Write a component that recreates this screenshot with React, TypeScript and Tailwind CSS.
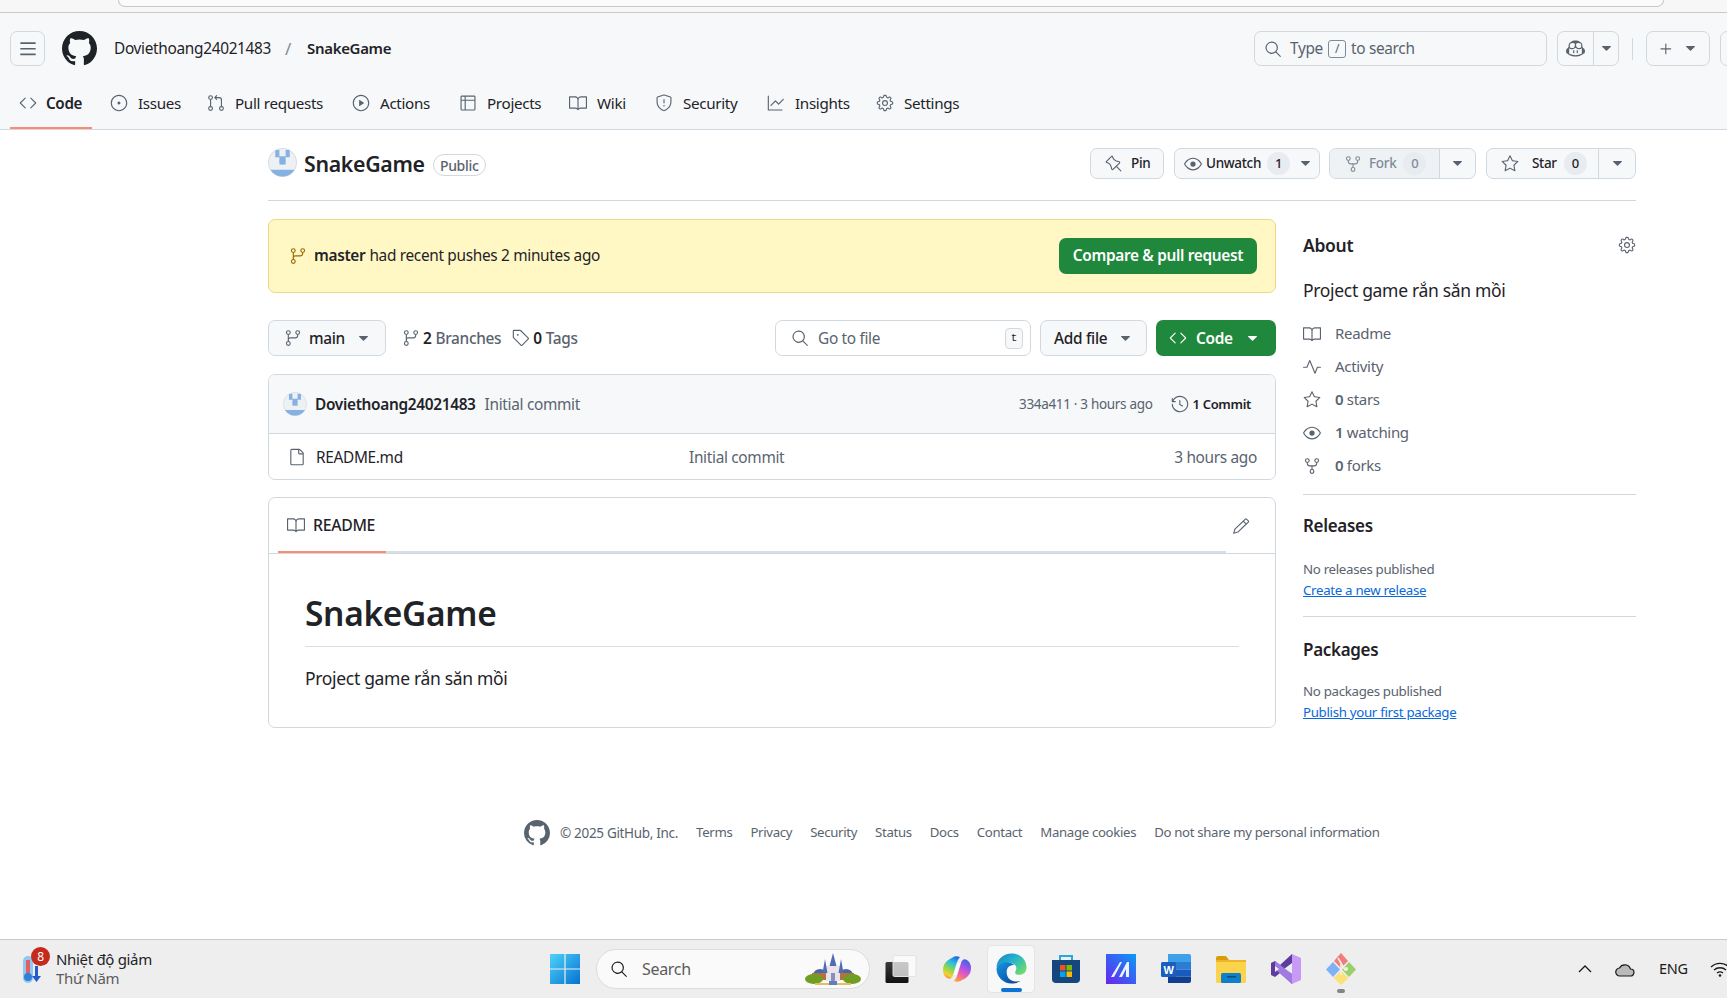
import type { ReactNode } from "react";
import {
  GoBook,
  GoCode,
  GoCopilot,
  GoEye,
  GoFile,
  GoGear,
  GoGitBranch,
  GoGitPullRequest,
  GoGraph,
  GoHistory,
  GoIssueOpened,
  GoPencil,
  GoPin,
  GoPlay,
  GoPlus,
  GoPulse,
  GoRepoForked,
  GoSearch,
  GoShield,
  GoStar,
  GoTable,
  GoTag,
  GoTriangleDown,
} from "react-icons/go";

const tabs = [
  { label: "Issues", icon: GoIssueOpened, width: "w-[97px]" },
  { label: "Pull requests", icon: GoGitPullRequest, width: "w-[145px]" },
  { label: "Actions", icon: GoPlay, width: "w-[107px]" },
  { label: "Projects", icon: GoTable, width: "w-[110px]" },
  { label: "Wiki", icon: GoBook, width: "w-[86px]" },
  { label: "Security", icon: GoShield, width: "w-[112px]" },
  { label: "Insights", icon: GoGraph, width: "w-[109px]" },
  { label: "Settings", icon: GoGear, width: "w-[90px]" },
];

const footerLinks = ["Terms", "Privacy", "Security", "Status", "Docs", "Contact", "Manage cookies", "Do not share my personal information"];

function GithubMark({ className }: { className: string }) {
  return (
    <svg viewBox="0 0 16 16" fill="currentColor" className={className}>
      <path d="M8 0c4.42 0 8 3.58 8 8a8.013 8.013 0 0 1-5.45 7.59c-.4.08-.55-.17-.55-.38 0-.27.01-1.13.01-2.2 0-.75-.25-1.23-.54-1.48 1.78-.2 3.65-.88 3.65-3.95 0-.88-.31-1.59-.82-2.15.08-.2.36-1.02-.08-2.12 0 0-.67-.22-2.2.82-.64-.18-1.32-.27-2-.27-.68 0-1.36.09-2 .27-1.53-1.03-2.2-.82-2.2-.82-.44 1.1-.16 1.92-.08 2.12-.51.56-.82 1.28-.82 2.15 0 3.06 1.86 3.75 3.64 3.95-.23.2-.44.55-.51 1.07-.46.21-1.61.55-2.33-.66-.15-.24-.6-.83-1.23-.82-.67.01-.27.38.01.53.34.19.73.9.82 1.13.16.45.68 1.31 2.69.94 0 .67.01 1.3.01 1.49 0 .21-.15.45-.55.38A7.995 7.995 0 0 1 0 8c0-4.42 3.58-8 8-8Z" />
    </svg>
  );
}

function Avatar({ size }: { size: string }) {
  return (
    <svg viewBox="0 0 28 28" className={`${size} shrink-0`}>
      <defs>
        <clipPath id="avatar-clip">
          <circle cx="14" cy="14" r="13.5" />
        </clipPath>
      </defs>
      <circle cx="14" cy="14" r="13.5" fill="#eef1f4" stroke="#d8dee4" />
      <g clipPath="url(#avatar-clip)" fill="#86b2e2">
        <path d="M7 2h4v6h3v5h-3V9H7zM17 2h4v7h-4v4h-3V8h3z" />
        <rect x="11" y="12" width="6" height="4" />
        <rect x="0" y="21" width="28" height="7" />
      </g>
    </svg>
  );
}

function Caret({ className = "text-[#59636e]" }: { className?: string }) {
  return <GoTriangleDown className={`w-[17px] h-[17px] shrink-0 ${className}`} />;
}

function RepoCount({ value, muted }: { value: string; muted?: boolean }) {
  return (
    <span className={`w-[23px] h-[23px] shrink-0 rounded-full bg-[#e8ebef] flex items-center justify-center text-[13px] font-medium ${muted ? "text-[#818b98]" : "text-[#1f2328]"}`}>
      {value}
    </span>
  );
}

function SplitButton({ width, mainWidth, muted, children }: { width: string; mainWidth: string; muted?: boolean; children: ReactNode }) {
  return (
    <div className={`${width} h-[31px] flex shrink-0 border border-[#d1d9e0] rounded-[7px] bg-[#f6f8fa] text-[13.5px] font-medium whitespace-nowrap`}>
      <div className={`${mainWidth} flex items-center rounded-l-[7px] ${muted ? "bg-[#eff2f5]" : ""}`}>{children}</div>
      <div className="flex-1 flex items-center justify-center">
        <Caret />
      </div>
    </div>
  );
}

function SideRow({ icon, children }: { icon: ReactNode; children: ReactNode }) {
  return (
    <div className="h-[33px] flex items-center text-[#59636e] text-[15px]">
      <span className="w-[32px] shrink-0 text-[#59636e]">{icon}</span>
      <span>{children}</span>
    </div>
  );
}

function WindowsLogo() {
  return (
    <svg viewBox="0 0 30 30" className="w-[30px] h-[30px]">
      <defs>
        <linearGradient id="win-grad" x1="0" y1="0" x2="1" y2="1">
          <stop offset="0" stopColor="#4fd2fa" />
          <stop offset="1" stopColor="#0472d0" />
        </linearGradient>
      </defs>
      <path fill="url(#win-grad)" d="M0 0h14.4v14.4H0zM15.6 0H30v14.4H15.6zM0 15.6h14.4V30H0zM15.6 15.6H30V30H15.6z" />
    </svg>
  );
}

function Castle() {
  return (
    <svg viewBox="0 0 56 32" className="w-[56px] h-[32px]">
      <path d="M8 22a7 6 0 0 1 14 0z" fill="#4668a8" />
      <path d="M34 22a7 6 0 0 1 14 0z" fill="#4668a8" />
      <rect x="7" y="20" width="16" height="7" fill="#b86f3e" />
      <rect x="33" y="20" width="16" height="7" fill="#b86f3e" />
      <rect x="21" y="13" width="14" height="15" fill="#e8e4ea" />
      <path d="M28 0l3.500 13h-7zM20 6l2.500 14h-5zM36 6l2.500 14h-5z" fill="#4f6cb4" />
      <rect x="26" y="20" width="4" height="8" fill="#8a8fb8" />
      <ellipse cx="9" cy="26" rx="9" ry="5" fill="#6f9e22" />
      <ellipse cx="47" cy="26" rx="9" ry="5" fill="#6f9e22" />
      <path d="M10 30h36v2H10z" fill="#e5bd62" />
      <rect x="24" y="28" width="8" height="4" fill="#5e7fc0" />
    </svg>
  );
}

function TaskView() {
  return (
    <svg viewBox="0 0 32 28" className="w-[32px] h-[28px]">
      <defs>
        <linearGradient id="tv-dark" x1="0" y1="0" x2="0" y2="1">
          <stop offset="0" stopColor="#3a3a3a" />
          <stop offset="1" stopColor="#111111" />
        </linearGradient>
      </defs>
      <rect x="0.500" y="7" width="23" height="21" rx="1.500" fill="url(#tv-dark)" />
      <rect x="8" y="0.500" width="23" height="21" rx="1.500" fill="#ffffff" fillOpacity="0.720" stroke="#e2e2e2" />
    </svg>
  );
}

function CopilotLogo() {
  return (
    <svg viewBox="0 0 30 30" className="w-[30px] h-[30px]">
      <defs>
        <linearGradient id="cp-a" x1="0.700" y1="0" x2="0.300" y2="1">
          <stop offset="0" stopColor="#1f6fe0" />
          <stop offset="0.300" stopColor="#2cc0e0" />
          <stop offset="0.600" stopColor="#8ed84a" />
          <stop offset="0.850" stopColor="#f8d030" />
          <stop offset="1" stopColor="#f58a3c" />
        </linearGradient>
        <linearGradient id="cp-b" x1="0.700" y1="0" x2="0.300" y2="1">
          <stop offset="0" stopColor="#3a64e6" />
          <stop offset="0.350" stopColor="#a552ea" />
          <stop offset="0.700" stopColor="#f062a8" />
          <stop offset="1" stopColor="#f9a040" />
        </linearGradient>
      </defs>
      <path fill="url(#cp-a)" d="M10 4C12 2 15 2 18 3c-2 2-3 5-4 8l-3 10c-1 3-3 5-6 3-3-2-4-5-4-8 0-6 4-10 9-12z" />
      <path fill="url(#cp-b)" d="M20 26c-2 2-5 2-8 1 2-2 3-5 4-8l3-10c1-3 3-5 6-3 3 2 4 5 4 8 0 6-4 10-9 12z" />
      <path fill="#ffffff" d="M15.500 9h3l-4 12h-3z" />
    </svg>
  );
}

function EdgeLogo() {
  return (
    <svg viewBox="0 0 32 32" className="w-[31px] h-[31px]">
      <defs>
        <linearGradient id="edge-a" x1="0" y1="0" x2="1" y2="0.800">
          <stop offset="0" stopColor="#1480c8" />
          <stop offset="0.500" stopColor="#25b5cc" />
          <stop offset="1" stopColor="#72dc68" />
        </linearGradient>
        <linearGradient id="edge-b" x1="0" y1="0" x2="0.900" y2="1">
          <stop offset="0" stopColor="#1a94e0" />
          <stop offset="0.600" stopColor="#0d66b8" />
          <stop offset="1" stopColor="#0a3f86" />
        </linearGradient>
      </defs>
      <path fill="url(#edge-a)" d="M.5 16C.5 6 8 .5 16 .5c9 0 15.500 6.500 15.500 14.500 0 5-3.500 7.500-7.500 7.500-3 0-5-1.500-4-3.500 1-1.500 1.500-3 .5-5.500-2-3-6-4-9-3C6 11.500.5 14 .5 16z" />
      <path fill="url(#edge-b)" d="M.5 16C.5 25 8 31.500 16 31.500c4 0 7-1 9.500-2.500-7.500 2-14.500-2-14.500-9 0-5 3-7.500 8-7.500-4-4.500-15-4.500-18.500 3.500z" />
    </svg>
  );
}

function StoreLogo() {
  return (
    <svg viewBox="0 0 30 30" className="w-[30px] h-[30px]">
      <path d="M9 6V2h12v4" fill="none" stroke="#28a8e0" strokeWidth="2" />
      <path d="M1 6h28v19a4 4 0 0 1-4 4H5a4 4 0 0 1-4-4z" fill="#15467e" />
      <rect x="9" y="11" width="5.500" height="5.500" fill="#f25022" />
      <rect x="15.500" y="11" width="5.500" height="5.500" fill="#7fba00" />
      <rect x="9" y="17.500" width="5.500" height="5.500" fill="#00a4ef" />
      <rect x="15.500" y="17.500" width="5.500" height="5.500" fill="#ffb900" />
    </svg>
  );
}

function PurpleApp() {
  return (
    <svg viewBox="0 0 30 30" className="w-[30px] h-[30px]">
      <defs>
        <linearGradient id="purple-app" x1="1" y1="0" x2="0" y2="1">
          <stop offset="0" stopColor="#0a9bf5" />
          <stop offset="1" stopColor="#6a22f0" />
        </linearGradient>
      </defs>
      <rect width="30" height="30" fill="url(#purple-app)" />
      <path d="M5 23L14 8h2L8 23zM13 23L21 8h2v15h-3v-8l-4 8z" fill="#eef4ff" />
    </svg>
  );
}

function WordLogo() {
  return (
    <svg viewBox="0 0 30 30" className="w-[30px] h-[30px]">
      <path d="M7 0h21a2 2 0 0 1 2 2v6H7z" fill="#3fa0ea" />
      <rect x="7" y="8" width="23" height="7.500" fill="#2b7cd3" />
      <rect x="7" y="15.500" width="23" height="7" fill="#185abd" />
      <path d="M7 22.500h23V27a2 2 0 0 1-2 2H7z" fill="#103f91" />
      <rect x="0" y="8" width="15" height="15" rx="1.500" fill="#1a5fbd" />
      <text x="7.500" y="20" textAnchor="middle" fontSize="11" fontWeight="700" fill="#fff" fontFamily="Liberation Sans, sans-serif">W</text>
    </svg>
  );
}

function FolderLogo() {
  return (
    <svg viewBox="0 0 30 28" className="w-[30px] h-[28px]">
      <path d="M0 3a2 2 0 0 1 2-2h8l3 4H0z" fill="#d99c0c" />
      <rect x="0" y="5" width="30" height="23" rx="1.500" fill="#fcd34d" />
      <rect x="0" y="5" width="30" height="2" fill="#f0b429" />
      <rect x="5" y="18" width="20" height="10" rx="1.500" fill="#0f7fc8" />
      <rect x="11" y="21" width="9" height="1.500" fill="#0b4d80" />
    </svg>
  );
}

function VsLogo() {
  return (
    <svg viewBox="0 0 30 30" className="w-[30px] h-[30px]">
      <path d="M21 0L9 11 4 7 0 9v12l4 2 5-4 12 11V20l-8-5 8-6z" fill="#5e3c9e" />
      <path d="M4 7l17 13v10L4 15z" fill="#a07ae0" />
      <path d="M21 0l9 4v22l-9 4z" fill="#c79af5" />
      <path d="M4 12l4 3-4 3z" fill="#eeeeee" />
    </svg>
  );
}

function GitToolLogo() {
  return (
    <svg viewBox="0 0 30 32" className="w-[30px] h-[32px]">
      <path d="M15 0l7 8-7 7-7-7z" fill="#f27c7c" />
      <path d="M7 9l7 7.500-7 7.500-7-7.500z" fill="#7fb2f5" />
      <path d="M23 9l7 7.500-7 7.500-7-7.500z" fill="#9ad06a" />
      <path d="M15 18l7.500 7-7.500 7-7.500-7z" fill="#fbe17a" />
      <path d="M12 5l7 12M15 9v13" stroke="#f2efe9" strokeWidth="1.500" />
      <circle cx="20" cy="16" r="2" fill="#f2efe9" />
    </svg>
  );
}

export default function App() {
  return (
    <div className="w-[1727px] h-[998px] overflow-hidden bg-white flex flex-col text-[#1f2328] font-['Noto_Sans',sans-serif] tracking-[-0.02em]">
      {/* Browser chrome strip */}
      <div className="h-[13px] shrink-0 bg-[#f7f7f7] border-b border-[#c9c9c9] pl-[118px]">
        <div className="w-[1546px] h-[7px] bg-[#fbfbfb] border border-t-0 border-[#c8c8c8] rounded-b-[12px]"></div>
      </div>

      {/* GitHub header */}
      <header className="h-[117px] shrink-0 bg-[#f6f8fa] border-b border-[#d1d9e0] flex flex-col">
        <div className="h-[35px] mt-[18px] flex items-center pl-[10px]">
          <div className="w-[35px] h-[35px] shrink-0 border border-[#d1d9e0] rounded-[7px] flex items-center justify-center text-[#59636e]">
            <svg viewBox="0 0 16 16" fill="currentColor" className="w-[18px] h-[18px]">
              <path d="M1 2.750A.75.75 0 0 1 1.750 2h12.500a.75.75 0 0 1 0 1.500H1.750A.75.75 0 0 1 1 2.750Zm0 5A.75.75 0 0 1 1.750 7h12.500a.75.75 0 0 1 0 1.500H1.750A.75.75 0 0 1 1 7.750ZM1.750 12h12.500a.75.75 0 0 1 0 1.500H1.750a.75.75 0 0 1 0-1.500Z" />
            </svg>
          </div>
          <GithubMark className="w-[35px] h-[35px] shrink-0 ml-[17px] text-[#1f2328]" />
          <span className="ml-[17px] w-[157px] shrink-0 text-[15.4px] whitespace-nowrap">Doviethoang24021483</span>
          <span className="ml-[14px] w-[22px] shrink-0 text-[#818b98] text-[17px]">/</span>
          <span className="w-[84px] shrink-0 text-[15px] font-semibold">SnakeGame</span>

          <div className="ml-[863px] w-[293px] h-[35px] shrink-0 border border-[#d1d9e0] rounded-[7px] flex items-center pl-[9px] text-[#59636e] text-[15.4px]">
            <GoSearch className="w-[18px] h-[18px] shrink-0" />
            <span className="ml-[8px]">Type</span>
            <span className="mx-[5px] w-[18px] h-[18px] shrink-0 border border-[#818b98] rounded-[3px] flex items-center justify-center text-[12px]">/</span>
            <span>to search</span>
          </div>
          <div className="ml-[10px] w-[62px] h-[35px] shrink-0 border border-[#d1d9e0] rounded-[7px] flex">
            <div className="w-[36px] flex items-center justify-center border-r border-[#d1d9e0]">
              <GoCopilot className="w-[19px] h-[19px] text-[#59636e]" />
            </div>
            <div className="flex-1 flex items-center justify-center">
              <Caret />
            </div>
          </div>
          <div className="ml-[13px] w-[1px] h-[22px] shrink-0 bg-[#d1d9e0]"></div>
          <div className="ml-[13px] w-[64px] h-[35px] shrink-0 border border-[#d1d9e0] rounded-[7px] flex items-center pl-[10px] gap-[7px] text-[#59636e]">
            <GoPlus className="w-[18px] h-[18px] shrink-0" />
            <Caret />
          </div>
          <div className="ml-[10px] w-[30px] h-[35px] shrink-0 border border-[#d1d9e0] rounded-[7px]"></div>
        </div>

        <nav className="mt-auto h-[38px] flex pl-[10px] text-[15.2px]">
          <div className="w-[82px] h-[38px] border-b-2 border-[#fd8c73] flex items-start pl-[9px] gap-[9px]">
            <GoCode className="w-[18px] h-[18px] mt-[3px] text-[#59636e]" />
            <span className="font-semibold leading-[24px]">Code</span>
          </div>
          <div className="flex pl-[18px]">
            {tabs.map((t) => (
              <div key={t.label} className={`${t.width} shrink-0 flex items-start gap-[10px]`}>
                <t.icon className="w-[18px] h-[18px] mt-[3px] shrink-0 text-[#59636e]" />
                <span className="leading-[24px] whitespace-nowrap">{t.label}</span>
              </div>
            ))}
          </div>
        </nav>
      </header>

      <main className="w-[1368px] ml-[268px]">
        {/* Repo title */}
        <div className="h-[71px] border-b border-[#d1d9e0] flex pt-[18px]">
          <Avatar size="w-[29px] h-[29px]" />
          <span className="ml-[7px] text-[21.3px] font-semibold leading-[34px] -mt-[1px]">SnakeGame</span>
          <span className="ml-[8px] mt-[6px] w-[53px] h-[22px] border border-[#d1d9e0] rounded-full flex items-center justify-center text-[14px] font-medium text-[#59636e]">Public</span>

          <div className="ml-auto flex items-start">
            <div className="w-[74px] h-[31px] shrink-0 border border-[#d1d9e0] rounded-[7px] bg-[#f6f8fa] flex items-center pl-[14px] gap-[8px] text-[13.5px] font-medium">
              <GoPin className="w-[18px] h-[18px] shrink-0 text-[#59636e]" />
              Pin
            </div>
            <div className="ml-[10px]">
              <SplitButton width="w-[146px]" mainWidth="w-[116px] pl-[9px]">
                <GoEye className="w-[18px] h-[18px] shrink-0 text-[#59636e]" />
                <span className="ml-[4px]">Unwatch</span>
                <span className="ml-[6px]">
                  <RepoCount value="1" />
                </span>
              </SplitButton>
            </div>
            <div className="ml-[9px]">
              <SplitButton width="w-[147px]" mainWidth="w-[110px] border-r border-[#d1d9e0] pl-[14px] gap-[7px] text-[#818b98]" muted>
                <GoRepoForked className="w-[18px] h-[18px] shrink-0" />
                Fork
                <RepoCount value="0" muted />
              </SplitButton>
            </div>
            <div className="ml-[10px]">
              <SplitButton width="w-[150px]" mainWidth="w-[112px] border-r border-[#d1d9e0] pl-[14px] gap-[7px]">
                <GoStar className="w-[18px] h-[18px] shrink-0 text-[#59636e]" />
                <span className="ml-[6px]">Star</span>
                <RepoCount value="0" />
              </SplitButton>
            </div>
          </div>
        </div>

        <div className="flex justify-between mt-[18px]">
          {/* Left column */}
          <div className="w-[1008px]">
            <div className="h-[74px] bg-[#fff8c5] border border-[#eed888] rounded-[7px] flex items-center pl-[20px] pr-[18px] text-[15.4px]">
              <GoGitBranch className="w-[18px] h-[18px] shrink-0 text-[#9a6700]" />
              <span className="ml-[7px] font-semibold">master</span>
              <span className="ml-[4px]">had recent pushes 2 minutes ago</span>
              <div className="ml-auto w-[198px] h-[36px] rounded-[7px] bg-[#1f883d] text-white font-semibold flex items-center justify-center">Compare &amp; pull request</div>
            </div>

            <div className="h-[36px] mt-[27px] flex items-center text-[15.4px]">
              <div className="w-[118px] h-[36px] shrink-0 border border-[#d1d9e0] rounded-[7px] bg-[#f6f8fa] flex items-center pl-[15px] font-medium">
                <GoGitBranch className="w-[18px] h-[18px] shrink-0 text-[#59636e]" />
                <span className="ml-[7px] mt-[2px]">main</span>
                <Caret className="ml-[10px] text-[#59636e]" />
              </div>
              <GoGitBranch className="ml-[16px] w-[18px] h-[18px] shrink-0 text-[#59636e]" />
              <span className="ml-[3px] mt-[2px] font-semibold">2</span>
              <span className="ml-[4px] mt-[2px] text-[#59636e] font-medium">Branches</span>
              <GoTag className="ml-[11px] w-[18px] h-[18px] shrink-0 text-[#59636e]" />
              <span className="ml-[3px] mt-[2px] font-semibold">0</span>
              <span className="ml-[4px] mt-[2px] text-[#59636e] font-medium">Tags</span>

              <div className="ml-auto w-[256px] h-[36px] shrink-0 border border-[#d1d9e0] rounded-[7px] flex items-center pl-[15px] pr-[7px] text-[#59636e]">
                <GoSearch className="w-[18px] h-[18px] shrink-0" />
                <span className="ml-[9px] mt-[2px]">Go to file</span>
                <span className="ml-auto w-[18px] h-[21px] border border-[#d1d9e0] rounded-[4px] bg-[#f6f8fa] flex items-center justify-center text-[11px] text-[#1f2328] font-['Liberation_Mono',monospace]">t</span>
              </div>
              <div className="ml-[9px] w-[107px] h-[36px] shrink-0 border border-[#d1d9e0] rounded-[7px] bg-[#f6f8fa] flex items-center pl-[13px] font-medium whitespace-nowrap">
                <span className="mt-[2px]">Add file</span>
                <Caret className="ml-[10px] text-[#59636e]" />
              </div>
              <div className="ml-[9px] w-[120px] h-[36px] shrink-0 rounded-[7px] bg-[#1f883d] text-white flex items-center pl-[13px] font-semibold">
                <GoCode className="w-[18px] h-[18px] shrink-0" />
                <span className="ml-[9px] mt-[2px]">Code</span>
                <Caret className="ml-[11px] text-white" />
              </div>
            </div>

            <div className="mt-[18px] border border-[#d1d9e0] rounded-[7px] overflow-hidden">
              <div className="h-[59px] bg-[#f6f8fa] border-b border-[#d1d9e0] flex items-center pl-[14px] pr-[24px] text-[15.4px]">
                <Avatar size="w-[24px] h-[24px]" />
                <span className="ml-[8px] mt-[1px] font-semibold">Doviethoang24021483</span>
                <span className="ml-[9px] mt-[1px] text-[#59636e]">Initial commit</span>
                <span className="ml-auto mt-[1px] text-[13.5px] text-[#59636e]">334a411 · 3 hours ago</span>
                <GoHistory className="ml-[18px] w-[18px] h-[18px] shrink-0 text-[#59636e]" />
                <span className="ml-[4px] mt-[1px] text-[13px] font-semibold">1 Commit</span>
              </div>
              <div className="h-[45px] flex items-center pl-[19px] pr-[18px] text-[15.4px]">
                <GoFile className="w-[18px] h-[18px] shrink-0 text-[#59636e]" />
                <span className="ml-[10px] mt-[2px] w-[373px]">README.md</span>
                <span className="mt-[2px] text-[#59636e]">Initial commit</span>
                <span className="ml-auto mt-[2px] text-[#59636e]">3 hours ago</span>
              </div>
            </div>

            <div className="mt-[17px] h-[231px] border border-[#d1d9e0] rounded-[7px] flex flex-col">
              <div className="h-[56px] shrink-0 border-b border-[#d1d9e0] flex pl-[9px] pr-[25px]">
                <div className="w-[108px] h-[55px] border-b-2 border-[#fd8c73] flex items-center pl-[9px] gap-[8px] text-[15.8px] font-medium">
                  <GoBook className="w-[18px] h-[18px] shrink-0 text-[#59636e]" />
                  <span className="mt-[3px]">README</span>
                </div>
                <div className="w-[840px] h-[55px] border-b-2 border-[#d8dee4]"></div>
                <GoPencil className="ml-auto mt-[19px] w-[18px] h-[18px] text-[#59636e]" />
              </div>
              <div className="px-[36px]">
                <h1 className="h-[93px] pt-[35px] border-b border-[#d8dee4] text-[33.5px] font-semibold leading-[48px]">SnakeGame</h1>
                <p className="mt-[18px] text-[17.5px] leading-[26px]">Project game rắn săn mồi</p>
              </div>
            </div>
          </div>

          {/* Sidebar */}
          <aside className="w-[333px]">
            <div className="flex items-center justify-between h-[18px] mt-[17px]">
              <h2 className="text-[17.5px] font-semibold">About</h2>
              <GoGear className="w-[18px] h-[18px] text-[#59636e]" />
            </div>
            <p className="mt-[23px] text-[17.5px] leading-[26px]">Project game rắn săn mồi</p>
            <div className="mt-[14px]">
              <SideRow icon={<GoBook className="w-[18px] h-[18px]" />}>Readme</SideRow>
              <SideRow icon={<GoPulse className="w-[18px] h-[18px]" />}>Activity</SideRow>
              <SideRow icon={<GoStar className="w-[18px] h-[18px]" />}><b className="font-semibold">0</b> stars</SideRow>
              <SideRow icon={<GoEye className="w-[18px] h-[18px]" />}><b className="font-semibold">1</b> watching</SideRow>
              <SideRow icon={<GoRepoForked className="w-[18px] h-[18px]" />}><b className="font-semibold">0</b> forks</SideRow>
            </div>

            <div className="mt-[12px] border-t border-[#d1d9e0] pt-[18px]">
              <h2 className="text-[17px] font-semibold leading-[26px]">Releases</h2>
              <p className="mt-[20px] text-[13.3px] text-[#59636e] leading-[20px]">No releases published</p>
              <p className="mt-[1px] text-[13.3px] text-[#0969da] underline leading-[20px]">Create a new release</p>
            </div>

            <div className="mt-[16px] border-t border-[#d1d9e0] pt-[20px]">
              <h2 className="text-[17px] font-semibold leading-[26px]">Packages</h2>
              <p className="mt-[18px] text-[13.3px] text-[#59636e] leading-[20px]">No packages published</p>
              <p className="mt-[1px] text-[13.3px] text-[#0969da] underline leading-[20px]">Publish your first package</p>
            </div>
          </aside>
        </div>
      </main>

      {/* Footer */}
      <footer className="mt-[92px] h-[26px] pl-[524px] flex items-center text-[13.2px] text-[#59636e] whitespace-nowrap">
        <GithubMark className="w-[26px] h-[26px] shrink-0" />
        <span className="ml-[10px] mr-[18px] text-[13.5px]">© 2025 GitHub, Inc.</span>
        <div className="flex gap-[18px]">
          {footerLinks.map((l) => (
            <span key={l}>{l}</span>
          ))}
        </div>
      </footer>

      {/* Windows taskbar */}
      <div className="mt-auto h-[59px] shrink-0 bg-[#eeeeee] border-t border-[#c9c9c9] flex items-center">
        <div className="relative ml-[22px] w-[21px] h-[30px] shrink-0">
          <svg viewBox="0 0 21 30" className="w-[21px] h-[30px]">
            <rect x="1" y="2" width="10" height="27" rx="5" fill="#8fc8f0" />
            <rect x="4" y="6" width="4" height="14" fill="#e0606a" />
            <circle cx="6" cy="23" r="4" fill="#2f80d8" />
            <path d="M16 12v10h3l-4.500 6-4.500-6h3V12z" fill="#2858d0" />
          </svg>
          <span className="absolute -top-[7px] left-[9px] w-[19px] h-[19px] rounded-full bg-[#c42b1c] text-white text-[12px] flex items-center justify-center">8</span>
        </div>
        <div className="ml-[13px] w-[120px] shrink-0 text-[15px] leading-[19px] whitespace-nowrap">
          <div>Nhiệt độ giảm</div>
          <div className="text-[#5c5c5c]">Thứ Năm</div>
        </div>

        <div className="ml-[374px] shrink-0">
          <WindowsLogo />
        </div>
        <div className="ml-[16px] w-[274px] h-[40px] shrink-0 bg-[#fafafa] border border-[#dcdcdc] rounded-full flex items-center pl-[13px] text-[16px] text-[#5c5c5c]">
          <GoSearch className="w-[18px] h-[18px] shrink-0 text-[#1b1b1b]" />
          <span className="ml-[14px]">Search</span>
          <span className="ml-auto mr-[8px]">
            <Castle />
          </span>
        </div>

        <div className="ml-[15px] shrink-0">
          <TaskView />
        </div>
        <div className="ml-[25px] shrink-0">
          <CopilotLogo />
        </div>
        <div className="ml-[15px] w-[48px] h-[48px] shrink-0 bg-[#f8f8f8] border border-[#e4e4e4] rounded-[5px] flex flex-col items-center pt-[7px]">
          <EdgeLogo />
          <span className="mt-[4px] w-[21px] h-[4px] rounded-full bg-[#0a74d0]"></span>
        </div>
        <div className="ml-[16px] shrink-0">
          <StoreLogo />
        </div>
        <div className="ml-[25px] shrink-0">
          <PurpleApp />
        </div>
        <div className="ml-[25px] shrink-0">
          <WordLogo />
        </div>
        <div className="ml-[25px] shrink-0">
          <FolderLogo />
        </div>
        <div className="ml-[25px] shrink-0">
          <VsLogo />
        </div>
        <div className="relative ml-[25px] shrink-0">
          <GitToolLogo />
          <span className="absolute -bottom-[8px] left-[11px] w-[8px] h-[4px] rounded-full bg-[#858585]"></span>
        </div>

        <svg viewBox="0 0 14 8" className="ml-[222px] w-[14px] h-[8px] shrink-0">
          <path d="M1 7l6-6 6 6" fill="none" stroke="#1b1b1b" strokeWidth="1.300" />
        </svg>
        <svg viewBox="0 0 20 16" className="ml-[23px] w-[20px] h-[16px] shrink-0">
          <path d="M5 15a4 4 0 0 1-.500-8 6 6 0 0 1 11 1 3.500 3.500 0 0 1 0 7z" fill="#b9b9b9" stroke="#1b1b1b" strokeWidth="1.200" />
        </svg>
        <span className="ml-[24px] text-[14.5px] text-[#1b1b1b]">ENG</span>
        <svg viewBox="0 0 20 16" className="ml-[22px] w-[20px] h-[16px] shrink-0">
          <path d="M1 6a13 13 0 0 1 18 0M4 9a9 9 0 0 1 12 0M7 12a5 5 0 0 1 6 0" fill="none" stroke="#1b1b1b" strokeWidth="1.400" />
          <circle cx="10" cy="14.500" r="1.300" fill="#1b1b1b" />
        </svg>
      </div>
    </div>
  );
}
